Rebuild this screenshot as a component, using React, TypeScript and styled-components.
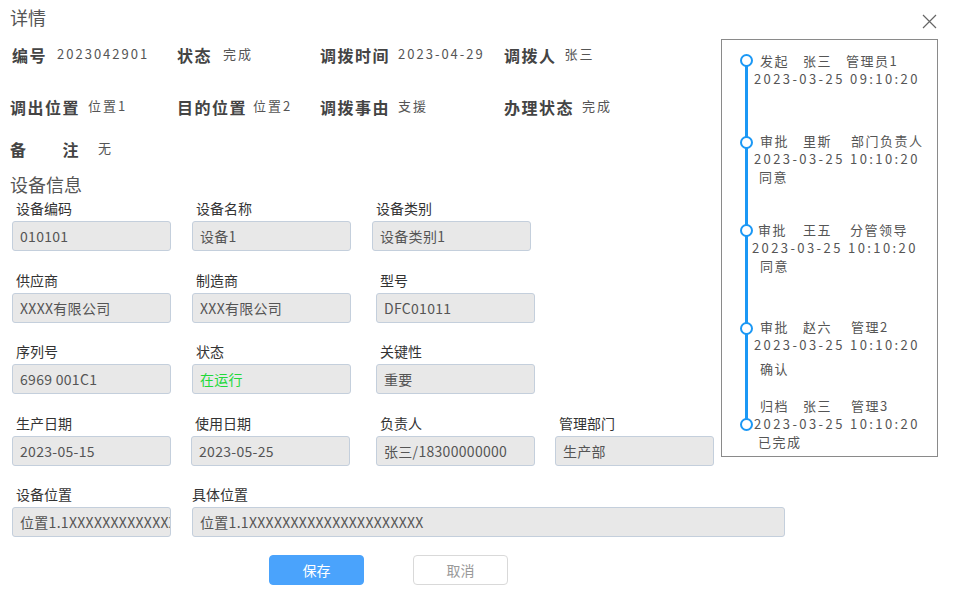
import React from "react";
import styled, { createGlobalStyle } from "styled-components";

const Global = createGlobalStyle`
  html, body { margin: 0; padding: 0; background: #fff; }
  body { font-family: "Noto Sans CJK SC", "Noto Sans", sans-serif; }
`;

const Page = styled.div`
  width: 956px;
  height: 610px;
  box-sizing: border-box;
  padding: 5px 18px 0 10px;
  background: #fff;
  color: #555;
`;

const TitleBar = styled.div`
  display: flex;
  justify-content: space-between;
  align-items: flex-start;
  height: 24px;
`;

const Title = styled.div`
  font-size: 18px;
  line-height: 24px;
  color: #555;
`;

const Close = styled.button`
  margin: 8px 1px 0 0;
  padding: 0;
  width: 16px;
  height: 16px;
  border: none;
  background: transparent;
  display: flex;
  align-items: center;
  justify-content: center;
`;

const Upper = styled.div`
  display: flex;
  align-items: flex-start;
`;

const LeftCol = styled.div`
  flex: 1;
  padding-top: 15px;
`;

const InfoRow = styled.div<{ $top?: number }>`
  display: grid;
  grid-template-columns: 167px 143px 184px 1fr;
  margin-top: ${(p) => p.$top ?? 0}px;
  height: 22px;
`;

const InfoItem = styled.div<{ $dx?: number }>`
  display: flex;
  align-items: flex-start;
  gap: 8px;
  margin-left: ${(p) => p.$dx ?? 0}px;
`;

const InfoLabel = styled.span`
  font-size: 16px;
  font-weight: bold;
  line-height: 22px;
  letter-spacing: 1.5px;
  color: #444;
  white-space: pre;
`;

const InfoValue = styled.span<{ $dx?: number }>`
  font-size: 13px;
  line-height: 20px;
  letter-spacing: 2px;
  color: #555;
  margin-left: ${(p) => p.$dx ?? 0}px;
`;

const Section = styled.div`
  font-size: 18px;
  line-height: 24px;
  color: #555;
  margin-top: 12px;
  margin-bottom: 3px;
`;

const FieldGrid = styled.div<{ $top?: number }>`
  display: grid;
  grid-template-columns: 180px 180px 183px 160px;
  row-gap: 19.5px;
  margin-left: 2px;
  margin-top: ${(p) => p.$top ?? 0}px;
`;

const Field = styled.div<{ $dx?: number; $span?: number }>`
  display: flex;
  flex-direction: column;
  margin-left: ${(p) => p.$dx ?? 0}px;
  grid-column: ${(p) => (p.$span ? `span ${p.$span}` : "auto")};
`;

const FieldLabel = styled.label<{ $dx?: number }>`
  display: block;
  height: 18px;
  font-size: 14px;
  line-height: 18px;
  color: #333;
  margin: 0 0 4px ${(p) => p.$dx ?? 4}px;
`;

const Input = styled.div<{ $w?: number; $green?: boolean }>`
  box-sizing: border-box;
  width: ${(p) => p.$w ?? 159}px;
  height: 30px;
  padding: 0 7px;
  background: #e8e8e8;
  border: 1px solid #c4cfdc;
  border-radius: 3px;
  font-size: 14px;
  letter-spacing: 0.3px;
  line-height: 28px;
  color: ${(p) => (p.$green ? "#22d93a" : "#555")};
  white-space: nowrap;
  overflow: hidden;
`;

const Timeline = styled.div`
  box-sizing: border-box;
  width: 217px;
  height: 418px;
  margin-top: 10px;
  border: 1px solid #8a8a8a;
  position: relative;
`;

const Track = styled.div`
  position: absolute;
  left: 23px;
  top: 20px;
  width: 3px;
  height: 364px;
  background: #1b98f5;
`;

const Dot = styled.div`
  position: absolute;
  left: 18px;
  width: 13px;
  height: 13px;
  box-sizing: border-box;
  border: 2.5px solid #1b98f5;
  border-radius: 50%;
  background: #fff;
`;

const TItem = styled.div`
  position: absolute;
  left: 0;
  right: 0;
  font-size: 13px;
  letter-spacing: 1.5px;
  color: #555;
  line-height: 18px;
`;

const TLine = styled.div<{ $dx?: number; $dy?: number }>`
  display: flex;
  margin-left: ${(p) => p.$dx ?? 38}px;
  margin-top: ${(p) => p.$dy ?? 0}px;
  white-space: nowrap;
`;

const TWord = styled.span<{ $gap?: number }>`
  margin-right: ${(p) => p.$gap ?? 0}px;
`;

const TDate = styled.div<{ $dx?: number }>`
  margin-left: ${(p) => p.$dx ?? 32}px;
  letter-spacing: 2.4px;
  white-space: nowrap;
`;

const Buttons = styled.div`
  display: flex;
  gap: 49px;
  margin: 18px 0 0 259px;
`;

const Btn = styled.button<{ $primary?: boolean }>`
  width: 95px;
  height: 30px;
  border-radius: 4px;
  font-family: inherit;
  font-size: 14px;
  cursor: pointer;
  border: 1px solid ${(p) => (p.$primary ? "#4aa3fc" : "#d9d9d9")};
  background: ${(p) => (p.$primary ? "#4aa3fc" : "#fff")};
  color: ${(p) => (p.$primary ? "#fff" : "#999")};
`;

type Step = {
  top: number;
  dot: number;
  words: string[];
  dx?: number;
  ddx?: number;
  date: string;
  note?: string;
  noteDy?: number;
  noteDx?: number;
  gaps: number[];
};

const steps: Step[] = [
  { top: 12, dot: 14, words: ["发起", "张三", "管理员1"], gaps: [14, 14], date: "2023-03-25 09:10:20" },
  { top: 92, dot: 96, words: ["审批", "里斯", "部门负责人"], gaps: [14, 19], date: "2023-03-25 10:10:20", note: "同意", noteDx: 37 },
  { top: 181, dot: 184, words: ["审批", "王五", "分管领导"], gaps: [16, 18], dx: 36, ddx: 30, date: "2023-03-25 10:10:20", note: "同意", noteDx: 38 },
  { top: 278, dot: 282, words: ["审批", "赵六", "管理2"], gaps: [14, 19], date: "2023-03-25 10:10:20", note: "确认", noteDx: 38, noteDy: 6 },
  { top: 357, dot: 378, words: ["归档", "张三", "管理3"], gaps: [14, 19], date: "2023-03-25 10:10:20", note: "已完成", noteDx: 36 },
];

type F = { label: string; value: string; dx?: number; green?: boolean };

const fields: F[] = [
  { label: "设备编码", value: "010101" },
  { label: "设备名称", value: "设备1" },
  { label: "设备类别", value: "设备类别1" },
  { label: "", value: "" },
  { label: "供应商", value: "XXXX有限公司" },
  { label: "制造商", value: "XXX有限公司" },
  { label: "型号", value: "DFC01011", dx: 4 },
  { label: "", value: "" },
  { label: "序列号", value: "6969 001C1" },
  { label: "状态", value: "在运行", green: true },
  { label: "关键性", value: "重要", dx: 4 },
  { label: "", value: "" },
  { label: "生产日期", value: "2023-05-15" },
  { label: "使用日期", value: "2023-05-25", dx: -1 },
  { label: "负责人", value: "张三/18300000000", dx: 4 },
  { label: "管理部门", value: "生产部" },
];

const CloseIcon = () => (
  <svg width="15" height="15" viewBox="0 0 15 15">
    <path d="M1 1 L14 14 M14 1 L1 14" stroke="#666" strokeWidth="1.2" fill="none" />
  </svg>
);

export default function App() {
  return (
    <Page>
      <Global />
      <TitleBar>
        <Title>详情</Title>
        <Close aria-label="close">
          <CloseIcon />
        </Close>
      </TitleBar>
      <Upper>
        <LeftCol>
          <InfoRow>
            <InfoItem $dx={2}>
              <InfoLabel>编号</InfoLabel>
              <InfoValue $dx={2}>2023042901</InfoValue>
            </InfoItem>
            <InfoItem>
              <InfoLabel>状态</InfoLabel>
              <InfoValue $dx={3}>完成</InfoValue>
            </InfoItem>
            <InfoItem>
              <InfoLabel>调拨时间</InfoLabel>
              <InfoValue>2023-04-29</InfoValue>
            </InfoItem>
            <InfoItem>
              <InfoLabel>调拨人</InfoLabel>
              <InfoValue>张三</InfoValue>
            </InfoItem>
          </InfoRow>
          <InfoRow $top={30}>
            <InfoItem>
              <InfoLabel>调出位置</InfoLabel>
              <InfoValue>位置1</InfoValue>
            </InfoItem>
            <InfoItem>
              <InfoLabel>目的位置</InfoLabel>
              <InfoValue $dx={-2}>位置2</InfoValue>
            </InfoItem>
            <InfoItem>
              <InfoLabel>调拨事由</InfoLabel>
              <InfoValue>支援</InfoValue>
            </InfoItem>
            <InfoItem>
              <InfoLabel>办理状态</InfoLabel>
              <InfoValue>完成</InfoValue>
            </InfoItem>
          </InfoRow>
          <InfoRow $top={20}>
            <InfoItem>
              <InfoLabel>{"备\u3000\u3000注"}</InfoLabel>
              <InfoValue $dx={10}>无</InfoValue>
            </InfoItem>
          </InfoRow>
          <Section>设备信息</Section>
          <FieldGrid>
            {fields.map((f, i) =>
              f.label ? (
                <Field key={i} $dx={f.dx}>
                  <FieldLabel>{f.label}</FieldLabel>
                  <Input $green={f.green}>{f.value}</Input>
                </Field>
              ) : (
                <div key={i} />
              )
            )}
          </FieldGrid>
        </LeftCol>
        <Timeline>
          <Track />
          {steps.map((s, i) => (
            <React.Fragment key={i}>
              <Dot style={{ top: s.dot }} />
              <TItem style={{ top: s.top }}>
                <TLine $dx={s.dx}>
                  <TWord $gap={s.gaps[0]}>{s.words[0]}</TWord>
                  <TWord $gap={s.gaps[1]}>{s.words[1]}</TWord>
                  <TWord>{s.words[2]}</TWord>
                </TLine>
                <TDate $dx={s.ddx}>{s.date}</TDate>
                {s.note && (
                  <TLine $dx={s.noteDx} $dy={s.noteDy}>
                    {s.note}
                  </TLine>
                )}
              </TItem>
            </React.Fragment>
          ))}
        </Timeline>
      </Upper>
      <FieldGrid $top={19}>
        <Field>
          <FieldLabel>设备位置</FieldLabel>
          <Input>位置1.1XXXXXXXXXXXXXXXXXXXXX</Input>
        </Field>
        <Field $span={3}>
          <FieldLabel $dx={0}>具体位置</FieldLabel>
          <Input $w={593}>位置1.1XXXXXXXXXXXXXXXXXXXXX</Input>
        </Field>
      </FieldGrid>
      <Buttons>
        <Btn $primary>保存</Btn>
        <Btn>取消</Btn>
      </Buttons>
    </Page>
  );
}
